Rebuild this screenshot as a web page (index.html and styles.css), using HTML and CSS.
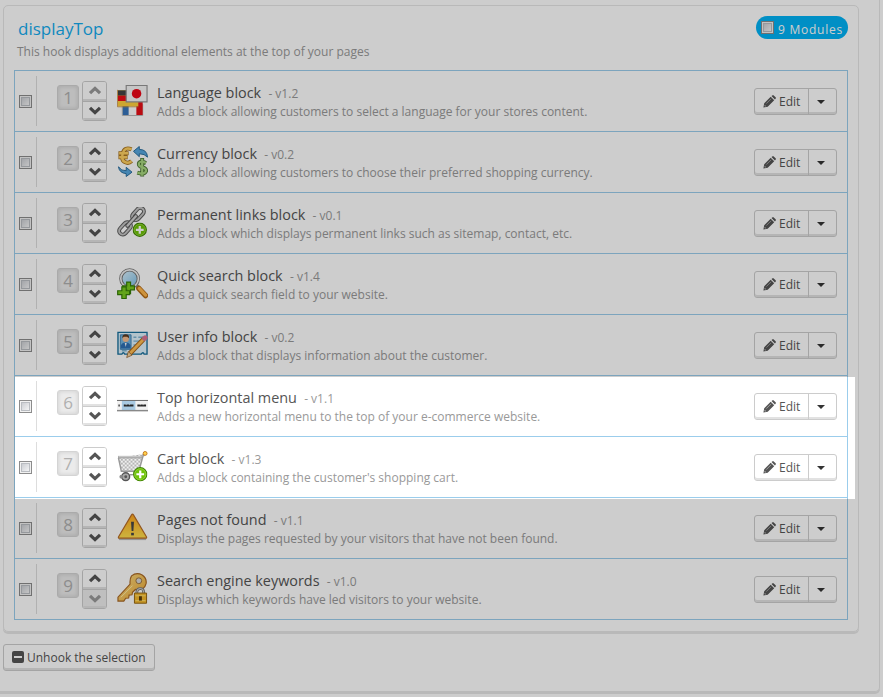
FILE: index.html
```html
<!DOCTYPE html>
<html lang="en">
<head>
<meta charset="utf-8">
<title>Module positions</title>
<link rel="stylesheet" href="styles.css">
</head>
<body>
<svg class="defs" width="0" height="0" aria-hidden="true">
  <defs>
    <linearGradient id="gold" x1="0" y1="0" x2="0" y2="1"><stop offset="0" stop-color="#ffa51c"/><stop offset="1" stop-color="#ffe04f"/></linearGradient>
    <linearGradient id="key" x1="0" y1="0" x2="1" y2="1"><stop offset="0" stop-color="#ffe08a"/><stop offset="1" stop-color="#e9a52f"/></linearGradient>
    <linearGradient id="lens" x1="0" y1="0" x2="1" y2="1"><stop offset="0" stop-color="#e2f5ff"/><stop offset="1" stop-color="#79bfe8"/></linearGradient>
    <pattern id="mesh" width="4" height="4" patternUnits="userSpaceOnUse"><rect width="4" height="4" fill="#f0f0f0"/><path d="M0 0h2v2H0zM2 2h2v2H2z" fill="#b4b4b4"/></pattern>
  </defs>
  <symbol id="i-up" viewBox="0 0 14 9"><path d="M2 7.200 7 2.400l5 4.800" fill="none" stroke="currentColor" stroke-width="3.200"/></symbol>
  <symbol id="i-down" viewBox="0 0 14 9"><path d="M2 1.800 7 6.600l5-4.800" fill="none" stroke="currentColor" stroke-width="3.200"/></symbol>
  <symbol id="i-pencil" viewBox="0 0 13 13"><path d="M.4 12.600 1.200 8.300 7.700 1.800l3.500 3.500-6.500 6.500zM8.500 1.100l.8-.7q.7-.6 1.400 0l1.900 1.900q.6.700 0 1.400l-.7.800z" fill="currentColor"/><path d="m3.300 8.600 4.800-4.800M1.900 9.900v1.200h1.200" stroke="#ccc" stroke-width=".6" fill="none"/></symbol>
  <symbol id="i-lang" viewBox="0 0 32 32">
    <path d="M5.500 20h21v11.500h-21z" fill="#fff" stroke="#b7b7b7"/><path d="M6 20h6v11H6z" fill="#3976bb"/><path d="M20 17h6.500v14H20z" fill="#e80e16"/>
    <path d="M1 5.500h17.500V22H1z" fill="#ffcf3d"/><path d="M1 5.500h17.500V11H1z" fill="#444"/><path d="M1 11h18v5.500H1z" fill="#ee0d16"/><path d="M18 16.500h4V22h-4z" fill="#ffcf3d"/><path d="M.5 5v17.500h21.500" fill="none" stroke="#c78b2e" stroke-width=".8"/>
    <path d="M9.500.5h21.500v17H9.500z" fill="#f5f5f5" stroke="#969696" stroke-width="1.200"/><circle cx="20.200" cy="9" r="4.900" fill="#ed0717"/>
  </symbol>
  <symbol id="i-currency" viewBox="0 0 32 32">
    <g fill="none"><path d="M15 3.500Q8 .5 6 7.500t2 9q4 2 7-1M1.500 7.500H12M1.500 11.500h9.500" stroke="#a87422" stroke-width="4.300"/><path d="M15 3.500Q8 .5 6 7.500t2 9q4 2 7-1M2.200 7.500h9.300M2.200 11.500h8.300" stroke="#ffd062" stroke-width="2.600"/>
    <path d="M30 17.500q-7-3-7.500 1 0 2.500 4 3.500 4 1.500 3.500 4-1.500 4-9 1.500M26 12.500v19" stroke="#497432" stroke-width="4"/><path d="M30 17.500q-7-3-7.500 1 0 2.500 4 3.500 4 1.500 3.500 4-1.500 4-9 1.500M26 13.200v17.600" stroke="#a9d77f" stroke-width="2.300"/></g>
    <path d="m17 5.500 6-5v3q8 0 8.500 8-3-3.500-8.500-3.500v3z" fill="#57a7df" stroke="#276b9c"/><path d="M1.500 21.500q3 4.500 8 4v-3.500l6 5-6 4.500v-3q-7-.5-8-7z" fill="#57a7df" stroke="#276b9c"/>
  </symbol>
  <symbol id="i-plus" viewBox="0 0 15 15"><circle cx="7.500" cy="7.500" r="6.800" fill="#6fc307" stroke="#438704" stroke-width="1.200"/><circle cx="7.500" cy="7.500" r="5.800" fill="none" stroke="#a6e25a" stroke-width=".6"/><path d="M7.500 3.500v8M3.500 7.500h8" stroke="#fff" stroke-width="2.300"/></symbol>
  <symbol id="i-link" viewBox="0 0 32 32">
    <g transform="rotate(-48 15 15)" fill="none"><g stroke="#5d5d5d" stroke-width="4"><rect x="-2" y="11" width="14.500" height="7.500" rx="3.700"/><rect x="18" y="11" width="14.500" height="7.500" rx="3.700"/></g><g stroke="#c5c5c5" stroke-width="2"><rect x="-2" y="11" width="14.500" height="7.500" rx="3.700"/><rect x="18" y="11" width="14.500" height="7.500" rx="3.700"/></g><path d="M9 14.700h13" stroke="#5d5d5d" stroke-width="4.500" stroke-linecap="round"/><path d="M9 14.700h13" stroke="#d2d2d2" stroke-width="2.300" stroke-linecap="round"/></g>
    <use href="#i-plus" x="16" y="16" width="15" height="15"/>
  </symbol>
  <symbol id="i-search" viewBox="0 0 32 32">
    <path d="m19 17 4 4" stroke="#8b8b8b" stroke-width="4"/><path d="m22.500 21 7 7.500" stroke="#b46b16" stroke-width="5.500" stroke-linecap="round"/><path d="m23 21 6.500 7" stroke="#ffb74c" stroke-width="3.300" stroke-linecap="round"/>
    <circle cx="13" cy="11" r="9" fill="url(#lens)" stroke="#777" stroke-width="3.400"/><circle cx="13" cy="11" r="9.100" fill="none" stroke="#f0f0f0" stroke-width="1.700"/>
    <path d="M10 14.500h4v4h4v4h-4v4h-4v-4H6v-4h4z" fill="#7bcc20" stroke="#367d06" stroke-width="1.200"/><path d="M5 19.500h4.500v4H13v4H9.500v4H5v-4H.7v-4H5z" fill="#7bcc20" stroke="#367d06" stroke-width="1.200"/>
  </symbol>
  <symbol id="i-user" viewBox="0 0 32 32">
    <path d="M1 3.500h30v22.500h-3q-1-3-3 0H8q-1.500-3-3 0H1z" fill="#dff3fd" stroke="#176f9c" stroke-width="1.400"/><path d="M3.500 6h11v15h-11z" fill="#73b5df" stroke="#4384b5"/>
    <path d="M4 20v-3q1-3 5-3t5 3v3z" fill="#2f71b5"/><circle cx="9" cy="10" r="3.300" fill="#f5bd91"/><path d="M5.600 9.500q-.5-4 3.400-4t3.400 4l-2-1.500H7z" fill="#5a3a20"/><path d="m8 14.500 1 4 1-4z" fill="#fff"/>
    <path d="M17 8.500h3m2 0h5M17 12.500h6M17 16.500h4M5 22.500h5" stroke="#7db3d1" stroke-width="1.500"/>
    <path d="m13.500 25 14-14.500" stroke="#a76519" stroke-width="5"/><path d="m13.500 25 14-14.500" stroke="#ffbd54" stroke-width="3"/><path d="m25.800 8.500 3 3" stroke="#888" stroke-width="2"/><path d="m29 9-.5.500" stroke="#da7495" stroke-width="5" stroke-linecap="round"/><path d="m10 29.500 1.600-6.200 4 3.700z" fill="#f8d5a0" stroke="#86521b" stroke-width=".7"/>
  </symbol>
  <symbol id="i-menu" viewBox="0 0 32 32">
    <path d="M0 11h32v10H0z" fill="#f1f1f1"/><path d="M5 11h14v10H5z" fill="#a9cae2"/><path d="M0 10.800h32" stroke="#666"/><path d="M0 21.300h32" stroke="#888" stroke-width="1.500"/><path d="M1.500 16h1.300M7 16h10M21 16h9" stroke="#252525" stroke-width="2"/><path d="M9.500 14.700v1M13 14.700v1M24 14.700v1M27 14.700v1" stroke="#eee" stroke-width=".7"/>
  </symbol>
  <symbol id="i-cart" viewBox="0 0 32 32">
    <path d="m1.500 7 3 14h18L27.500 3" fill="url(#mesh)" stroke="#999" stroke-width="1.500"/><path d="M1 6.300h25" stroke="#999" stroke-width="2.500"/><path d="M1.500 6h24" stroke="#ddd"/><path d="M22 21.500q-2 3.500-9 3" fill="none" stroke="#999" stroke-width="1.500"/>
    <path d="m27 5 2-3" stroke="#999" stroke-width="2"/><circle cx="29" cy="2.500" r="2" fill="#ffd24c" stroke="#c57a20"/><circle cx="9" cy="26.500" r="4" fill="#aaa" stroke="#555" stroke-width="1.500"/><circle cx="9" cy="26.500" r="1.500" fill="#555"/><circle cx="4.500" cy="26.500" r="2" fill="#888"/>
    <use href="#i-plus" x="16.500" y="16.500" width="15" height="15"/>
  </symbol>
  <symbol id="i-warn" viewBox="0 0 32 32">
    <path d="M2 28h28" stroke="#888" stroke-opacity=".6" stroke-width="2"/><path d="M15 3q1-1.500 2 0l13.500 22.700q.5 1.300-1 1.300h-27q-1.500 0-1-1.300z" fill="url(#gold)" stroke="#b76b27" stroke-width="1.200"/><path d="M14.500 10h3l-.6 9.500h-1.800z" fill="#474747"/><path d="M14.600 21.500h2.800v2.600h-2.800z" fill="#474747"/>
  </symbol>
  <symbol id="i-key" viewBox="0 0 32 32">
    <path d="M15 3q5-4 11-1 5 3.500 4 9-1.500 6-8 6.500l-3-.5-3 3-.5 2.500-3 .3-.5 3-3 .3L7 29H1v-4l12.500-13.500Q13 6 15 3z" fill="url(#key)" stroke="#a96824" stroke-width="1.200"/><path d="m4 25 12-12" stroke="#fff0a8"/><circle cx="22.500" cy="8" r="3" fill="#d7d7d7" stroke="#9b733d"/>
    <path d="M20.500 22v-2.500q0-3.500 3.500-3.500t3.500 3.500V22" fill="none" stroke="#777" stroke-width="2.800"/><path d="M20.500 22v-2.500q0-3.500 3.500-3.500t3.500 3.500V22" fill="none" stroke="#ddd" stroke-width="1"/><path d="M18 20.700h12.500v10.500H18z" fill="#f5b82c" stroke="#94640e"/><path d="M19 23.500h10.500M19 28.500h10.500" stroke="#ffdf70"/><path d="M22.700 24h3v4.500h-3z" fill="#5b3d0b"/>
  </symbol>
</svg>

<main class="outer">
  <section class="panel">
    <header class="head">
      <div><h1>displayTop</h1><p>This hook displays additional elements at the top of your pages</p></div>
      <label class="badge"><i class="check"></i><span>9 Modules</span></label>
    </header>
    <ul class="list">
      <li class="row"><div class="select"><i class="check"></i></div><span class="num">1</span><div class="move"><b class="off"><svg><use href="#i-up"/></svg></b><b><svg><use href="#i-down"/></svg></b></div><svg class="icon"><use href="#i-lang"/></svg><div class="text"><h2>Language block <small>- v1.2</small></h2><p>Adds a block allowing customers to select a language for your stores content.</p></div><div class="edit"><span><svg><use href="#i-pencil"/></svg>Edit</span><i></i></div></li>
      <li class="row"><div class="select"><i class="check"></i></div><span class="num">2</span><div class="move"><b><svg><use href="#i-up"/></svg></b><b><svg><use href="#i-down"/></svg></b></div><svg class="icon"><use href="#i-currency"/></svg><div class="text"><h2>Currency block <small>- v0.2</small></h2><p>Adds a block allowing customers to choose their preferred shopping currency.</p></div><div class="edit"><span><svg><use href="#i-pencil"/></svg>Edit</span><i></i></div></li>
      <li class="row"><div class="select"><i class="check"></i></div><span class="num">3</span><div class="move"><b><svg><use href="#i-up"/></svg></b><b><svg><use href="#i-down"/></svg></b></div><svg class="icon"><use href="#i-link"/></svg><div class="text"><h2>Permanent links block <small>- v0.1</small></h2><p>Adds a block which displays permanent links such as sitemap, contact, etc.</p></div><div class="edit"><span><svg><use href="#i-pencil"/></svg>Edit</span><i></i></div></li>
      <li class="row"><div class="select"><i class="check"></i></div><span class="num">4</span><div class="move"><b><svg><use href="#i-up"/></svg></b><b><svg><use href="#i-down"/></svg></b></div><svg class="icon"><use href="#i-search"/></svg><div class="text"><h2>Quick search block <small>- v1.4</small></h2><p>Adds a quick search field to your website.</p></div><div class="edit"><span><svg><use href="#i-pencil"/></svg>Edit</span><i></i></div></li>
      <li class="row"><div class="select"><i class="check"></i></div><span class="num">5</span><div class="move"><b><svg><use href="#i-up"/></svg></b><b><svg><use href="#i-down"/></svg></b></div><svg class="icon"><use href="#i-user"/></svg><div class="text"><h2>User info block <small>- v0.2</small></h2><p>Adds a block that displays information about the customer.</p></div><div class="edit"><span><svg><use href="#i-pencil"/></svg>Edit</span><i></i></div></li>
      <li class="row"><div class="select"><i class="check"></i></div><span class="num">6</span><div class="move"><b><svg><use href="#i-up"/></svg></b><b><svg><use href="#i-down"/></svg></b></div><svg class="icon"><use href="#i-menu"/></svg><div class="text"><h2>Top horizontal menu <small>- v1.1</small></h2><p>Adds a new horizontal menu to the top of your e-commerce website.</p></div><div class="edit"><span><svg><use href="#i-pencil"/></svg>Edit</span><i></i></div></li>
      <li class="row"><div class="select"><i class="check"></i></div><span class="num">7</span><div class="move"><b><svg><use href="#i-up"/></svg></b><b><svg><use href="#i-down"/></svg></b></div><svg class="icon"><use href="#i-cart"/></svg><div class="text"><h2>Cart block <small>- v1.3</small></h2><p>Adds a block containing the customer's shopping cart.</p></div><div class="edit"><span><svg><use href="#i-pencil"/></svg>Edit</span><i></i></div></li>
      <li class="row"><div class="select"><i class="check"></i></div><span class="num">8</span><div class="move"><b><svg><use href="#i-up"/></svg></b><b><svg><use href="#i-down"/></svg></b></div><svg class="icon"><use href="#i-warn"/></svg><div class="text"><h2>Pages not found <small>- v1.1</small></h2><p>Displays the pages requested by your visitors that have not been found.</p></div><div class="edit"><span><svg><use href="#i-pencil"/></svg>Edit</span><i></i></div></li>
      <li class="row"><div class="select"><i class="check"></i></div><span class="num">9</span><div class="move"><b><svg><use href="#i-up"/></svg></b><b class="off"><svg><use href="#i-down"/></svg></b></div><svg class="icon"><use href="#i-key"/></svg><div class="text"><h2>Search engine keywords <small>- v1.0</small></h2><p>Displays which keywords have led visitors to your website.</p></div><div class="edit"><span><svg><use href="#i-pencil"/></svg>Edit</span><i></i></div></li>
    </ul>
  </section>
  <button class="unhook"><i></i>Unhook the selection</button>
</main>
<div class="spotlight"></div>
</body>
</html>
```
FILE: styles.css
```css
* { box-sizing: border-box; }
html, body { height: 100%; overflow: hidden; }
body { margin: 0; background: #fff; color: #555; font: 12px/18px "Open Sans", sans-serif; position: relative; }
h1, h2, p, ul { margin: 0; padding: 0; font-weight: 400; }
.defs { position: absolute; }
.outer { width: 880px; height: 692px; padding: 5px 0 0 3px; border: solid #e6e6e6; border-width: 0 1px 1px 0; border-radius: 0 0 5px 0; box-shadow: 0 2px 0 #e6e6e6; }
.panel { width: 856px; height: 627px; padding: 0 10px; border: 1px solid #e6e6e6; border-radius: 5px; box-shadow: 0 2px 0 #e6e6e6; }
.head { height: 64px; display: flex; justify-content: space-between; padding: 10px 0 0 3px; }
.head h1 { font-size: 17px; line-height: 26px; color: #14abee; padding-left: 1px; }
.head p { color: #999; font-size: 12px; line-height: 20px; }
.badge { display: flex; width: 92px; height: 23px; border-radius: 12px; background: #00b2f5; color: #fff; padding: 5px 0 0 5px; font-size: 12px; letter-spacing: .75px; }
.badge span { margin-left: 4px; white-space: nowrap; }
.check { display: block; flex: none; width: 13px; height: 13px; border: 1px solid #8c8c8c; background: linear-gradient(135deg, #c0c3c9, #fff); box-shadow: inset 0 0 0 1px #f2f2f2, inset 0 0 0 2px #babdc2; }
.list { list-style: none; border: 1px solid #9bcdec; border-bottom: 0; }
.row { display: flex; align-items: flex-start; height: 61px; border-bottom: 1px solid #9bcdec; }
.select { width: 22px; height: 50px; margin-top: 5px; padding: 19px 0 0 4px; border-right: 1px solid #ddd; }
.num { width: 22px; height: 25px; margin: 14px 3px 0 20px; border: 1px solid #d4d4d4; border-radius: 3px; background: #ebebeb; box-shadow: inset 0 0 4px #ccc; color: #b0b0b0; font-size: 17px; line-height: 23px; text-align: center; }
.move { width: 25px; height: 40px; margin-top: 10px; border: 1px solid #ccc; border-radius: 3px; overflow: hidden; }
.move b { display: flex; height: 19px; padding-bottom: 2px; align-items: center; justify-content: center; background: #fff; box-shadow: inset 0 -2px #e2e2e2; color: #555; }
.move b + b { border-top: 1px solid #ccc; }
.move svg { width: 14px; height: 9px; }
.move .off { color: #999; }
.move b + .off { background: #eee; }
.icon { width: 31px; height: 31px; margin: 14px 9px 0 10px; flex: none; }
.text { flex: 1; padding-top: 12px; white-space: nowrap; }
.text h2 { font-size: 14.4px; line-height: 20px; }
.text small { font-size: 12px; color: #999; margin-left: 3.5px; }
.text p { color: #999; font-size: 12px; line-height: 18px; margin-top: -1px; }
.edit { display: flex; width: 83px; height: 27px; margin: 17px 10px 0 0; border: 1px solid #ccc; border-radius: 3px; box-shadow: inset 0 -2px #e2e2e2; }
.edit span { display: flex; width: 54px; border-right: 1px solid #ccc; padding-left: 8px; line-height: 25px; }
.edit svg { width: 13px; height: 13px; margin: 6px 3px 0 0; }
.edit i { width: 0; height: 0; margin: 11px 0 0 8px; border: 4px solid transparent; border-top-color: #333; border-bottom: 0; }
.unhook { display: flex; width: 152px; height: 27px; margin-top: 12px; padding: 0 0 0 8px; border: 1px solid #ccc; border-radius: 3px; background: #fff; box-shadow: inset 0 -2px #e2e2e2; color: #555; font: 12px/25px "Open Sans", sans-serif; white-space: nowrap; }
.unhook i { width: 12px; height: 12px; margin: 6px 3px 0 0; border-radius: 2px; background: linear-gradient(#fff, #fff) center / 8px 2px no-repeat #555; }
.spotlight { position: absolute; left: 15px; top: 377px; width: 840px; height: 122px; box-shadow: 0 0 0 1200px rgba(0, 0, 0, .196); pointer-events: none; }
```
